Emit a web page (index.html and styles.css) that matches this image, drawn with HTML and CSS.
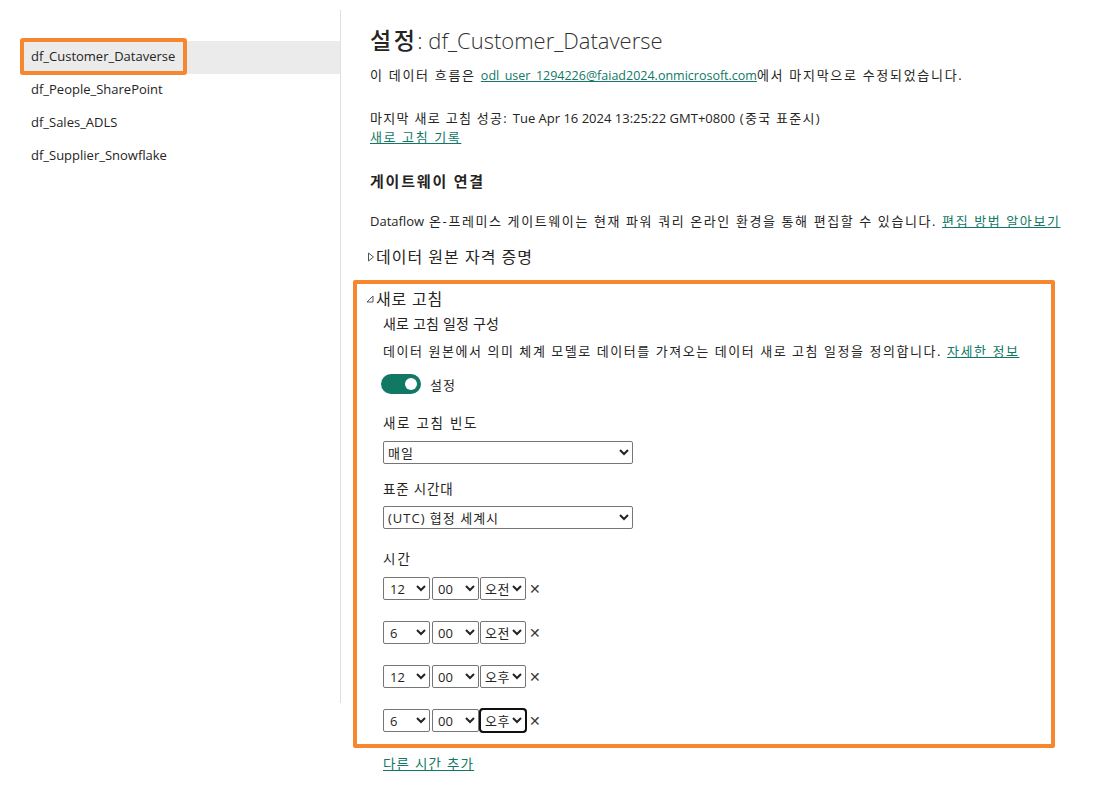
FILE: index.html
```html
<!DOCTYPE html>
<html lang="ko">
<head>
<meta charset="utf-8">
<title>설정</title>
<link rel="stylesheet" href="styles.css">
</head>
<body>
<div class="page">
  <nav class="sidebar">
    <div class="item selected"><span class="annot"></span>df_Customer_Dataverse</div>
    <div class="item">df_People_SharePoint</div>
    <div class="item">df_Sales_ADLS</div>
    <div class="item">df_Supplier_Snowflake</div>
  </nav>
  <main class="main">
    <h1 class="title"><span class="title-ko">설정</span>: df_Customer_Dataverse</h1>
    <p class="p1 ko">이 데이터 흐름은 <a class="en email" href="#">odl_user_1294226@faiad2024.onmicrosoft.com</a>에서 마지막으로 수정되었습니다.</p>
    <p class="p2 ko">마지막 새로 고침 성공: <span class="en">Tue Apr 16 2024 13:25:22 GMT+0800</span> (중국 표준시)<br><a class="hist" href="#">새로 고침 기록</a></p>
    <h2 class="h2">게이트웨이 연결</h2>
    <p class="p3 ko"><span class="en">Dataflow</span> 온-프레미스 게이트웨이는 현재 파워 쿼리 온라인 환경을 통해 편집할 수 있습니다. <a href="#">편집 방법 알아보기</a></p>
    <div class="collapse"><svg class="tri" width="8" height="12" viewBox="0 0 8 12"><path d="M1.5 2 L6.5 6 L1.5 10 Z" fill="none" stroke="#555" stroke-width="1"/></svg>데이터 원본 자격 증명</div>
    <section class="refresh">
      <div class="collapse expanded"><svg class="tri2" width="10" height="12" viewBox="0 0 10 12"><path d="M8 3 L8 9 L2 9 Z" fill="none" stroke="#555" stroke-width="1"/></svg>새로 고침</div>
      <div class="inner">
        <div class="sub">새로 고침 일정 구성</div>
        <p class="desc ko">데이터 원본에서 의미 체계 모델로 데이터를 가져오는 데이터 새로 고침 일정을 정의합니다. <a href="#">자세한 정보</a></p>
        <div class="toggle-row"><span class="toggle"><span class="knob"></span></span><span class="toggle-label">설정</span></div>
        <div class="label l-freq">새로 고침 빈도</div>
        <select class="wide"><option>매일</option></select>
        <div class="label l-tz">표준 시간대</div>
        <select class="wide"><option>(UTC) 협정 세계시</option></select>
        <div class="label l-time">시간</div>
        <div class="time-row first">
          <select class="hr"><option>12</option></select><select class="mn"><option>00</option></select><select class="ap"><option>오전</option></select><span class="x">✕</span>
        </div>
        <div class="time-row">
          <select class="hr"><option>6</option></select><select class="mn"><option>00</option></select><select class="ap"><option>오전</option></select><span class="x">✕</span>
        </div>
        <div class="time-row">
          <select class="hr"><option>12</option></select><select class="mn"><option>00</option></select><select class="ap"><option>오후</option></select><span class="x">✕</span>
        </div>
        <div class="time-row">
          <select class="hr"><option>6</option></select><select class="mn"><option>00</option></select><select class="ap focus"><option>오후</option></select><span class="x">✕</span>
        </div>
      </div>
    </section>
    <a class="add" href="#">다른 시간 추가</a>
  </main>
</div>
</body>
</html>
```
FILE: styles.css
```css
* { box-sizing: border-box; }
html, body { margin: 0; padding: 0; background: #fff; }
body {
  font-family: "Open Sans", "Noto Sans CJK KR", sans-serif;
  color: #252423;
  font-size: 13px;
}
.page { display: flex; align-items: flex-start; }
.sidebar {
  width: 341px;
  flex: none;
  margin-top: 10px;
  height: 693px;
  border-right: 1px solid #e1dfdd;
  padding: 31px 0 0 20px;
}
.item {
  position: relative;
  height: 33px;
  line-height: 31px;
  padding-left: 11px;
  font-size: 13px;
  color: #252423;
}
.item.selected { background: #ebebeb; }
.annot {
  position: absolute;
  left: 0;
  top: -3px;
  width: 167px;
  height: 37px;
  border: 4px solid #f7872e;
  border-radius: 3px;
}
.main { padding: 25px 0 0 29px; flex: 1; }
.title {
  margin: 0;
  font-size: 22px;
  line-height: 30px;
  font-weight: 300;
  color: #323130;
}
.title-ko { font-weight: 500; color: #252423; font-size: 23px; letter-spacing: 2.5px; }
p { margin: 0; }
a { color: #117865; text-decoration: underline; }
.ko { letter-spacing: 1.8px; }
.en { letter-spacing: 0; }
.email { font-size: 12.5px; }
.p1 { margin-top: 10px; line-height: 20px; letter-spacing: 1.7px; }
.p2 { margin-top: 23px; line-height: 19px; letter-spacing: 1.3px; }
.p2 .hist { letter-spacing: 1.6px; }
.h2 { margin: 23px 0 0; font-size: 15px; line-height: 22px; font-weight: 700; letter-spacing: 1.8px; }
.p3 { margin-top: 19px; line-height: 20px; letter-spacing: 1.6px; }
.collapse {
  margin-top: 15px;
  font-size: 16px;
  line-height: 22px;
  display: flex;
  align-items: center;
  margin-left: -3px;
  color: #252423;
  letter-spacing: 1px;
}
.tri { margin-right: 1px; }
.refresh {
  margin: 12px 0 0 -17px;
  width: 702px;
  border: 4px solid #f7872e;
  border-radius: 2px;
  padding: 4px 0 12px 8px;
}
.collapse.expanded { margin: 0; letter-spacing: 0.8px; }
.tri2 { margin-right: 1px; }
.inner { padding-left: 18px; }
.sub { margin-top: 4px; font-size: 14px; line-height: 20px; letter-spacing: 0.2px; }
.desc { margin-top: 7px; line-height: 20px; letter-spacing: 1.55px; }
.toggle-row { margin-top: 13px; height: 20px; display: flex; align-items: center; margin-left: -2px; }
.toggle {
  width: 40px; height: 20px; border-radius: 10px;
  background: #117865; position: relative; display: inline-block;
}
.knob {
  position: absolute; right: 4px; top: 4px;
  width: 12px; height: 12px; border-radius: 50%; background: #fff;
}
.toggle-label { margin-left: 9px; font-size: 13px; letter-spacing: 1px; }
.label { line-height: 20px; font-size: 13.5px; letter-spacing: 1.2px; }
.l-freq { margin-top: 19px; letter-spacing: 1.7px; }
.l-tz { margin-top: 15px; letter-spacing: 0.8px; }
.l-time { margin-top: 20px; letter-spacing: 2px; }
select {
  font-family: "Open Sans", "Noto Sans CJK KR", sans-serif;
  font-size: 13px;
  height: 23px;
  border: 1px solid #767676;
  border-radius: 2px;
  background: #fff;
  color: #252423;
  padding: 0 0 0 1px;
  margin: 0;
  display: block;
}
.wide { width: 250px; margin-top: 8px; letter-spacing: 1px; padding-left: 0; }
.l-tz + .wide { margin-top: 7px; }
.time-row { display: flex; align-items: center; margin-top: 21px; }
.time-row.first { margin-top: 8px; }
.time-row select { display: inline-block; }
.hr { width: 47px; padding-left: 2px; }
.mn { width: 47px; margin-left: 2px; }
.ap { width: 46px; margin-left: 1px; padding-left: 0; letter-spacing: 0.5px; }
.ap.focus { outline: 2px solid #101010; outline-offset: -1px; border-radius: 3px; }
.x { margin-left: 3px; font-size: 14px; color: #3b3a39; font-family: "DejaVu Sans", sans-serif; }
.add { display: inline-block; margin-top: 6px; line-height: 20px; margin-left: 13px; font-size: 13.5px; letter-spacing: 1.2px; }
```
